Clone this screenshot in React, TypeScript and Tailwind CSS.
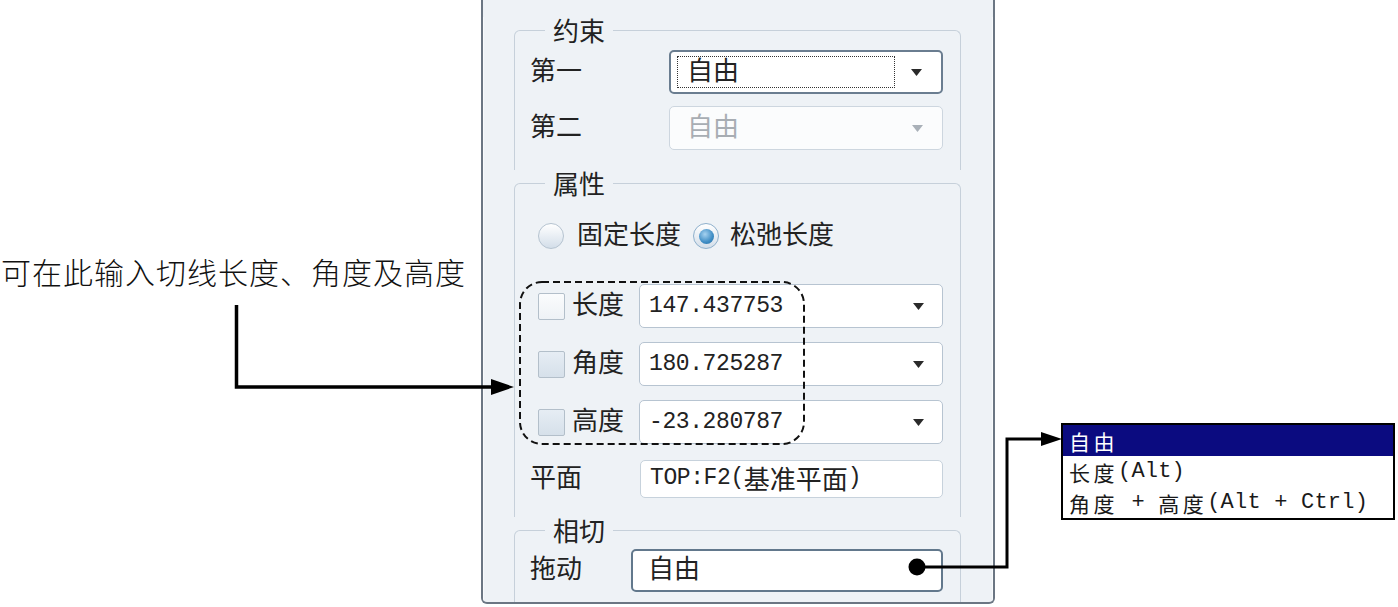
import React from "react";

const CJK_RE = /([\u3000-\u303f\u4e00-\u9fff\uff00-\uffef]+)/;

// splits a label into CJK runs and half-width runs so each gets its own font
function Mixed({ text, cjk, latin }: { text: string; cjk: string; latin: string }) {
  const parts = text.split(CJK_RE).filter(Boolean);
  return (
    <>
      {parts.map((p, i) =>
        CJK_RE.test(p) ? (
          <span key={i} className={cjk}>{p}</span>
        ) : (
          <span key={i} className={latin}>{p}</span>
        )
      )}
    </>
  );
}

const PANEL_CJK = "font-['Noto_Sans_CJK_SC',sans-serif] text-[26px] leading-[26px]";
// block labels sit a few px high in the reference
const LABEL = `${PANEL_CJK} pb-[7px]`;
const PANEL_MONO = "font-['Liberation_Mono','DejaVu_Sans_Mono',monospace] text-[23px] leading-[26px] tracking-[-0.4px] whitespace-pre";

function Arrow({ disabled }: { disabled?: boolean }) {
  return (
    <svg width="11" height="7" viewBox="0 0 11 7" className="shrink-0">
      <path d="M0 0h11L5.5 7z" fill={disabled ? "#a9b0b8" : "#2a2a2a"} />
    </svg>
  );
}

function Group({ title, children, className = "" }: { title: string; children: React.ReactNode; className?: string }) {
  return (
    <fieldset className={`rounded-t-[6px] border border-b-0 border-[#c6d0da] ${className}`}>
      <legend className="ml-[30px] px-[8px] text-[26px] leading-[26px] text-[#222] font-['Noto_Sans_CJK_SC',sans-serif]">
        {title}
      </legend>
      {children}
    </fieldset>
  );
}

function Radio({ checked }: { checked?: boolean }) {
  return (
    <span
      className={`flex h-[26px] w-[26px] shrink-0 items-center justify-center rounded-full border ${
        checked ? "border-[#8eb0cc]" : "border-[#b5c3d0]"
      } bg-gradient-to-b from-[#ffffff] to-[#d3dee9]`}
    >
      {checked && (
        <span className="h-[15px] w-[15px] rounded-full bg-[radial-gradient(circle_at_40%_35%,#a6d2f0,#3d8cc4_60%,#2a6fa3)]" />
      )}
    </span>
  );
}

function Check({ tint }: { tint?: boolean }) {
  return (
    <span
      className={`h-[27px] w-[27px] shrink-0 rounded-[2px] border border-[#b3bfca] ${
        tint ? "bg-gradient-to-b from-[#e6edf4] to-[#d6e0ea]" : "bg-gradient-to-b from-[#fbfcfd] to-[#eef2f6]"
      }`}
    />
  );
}

function ValueRow({ label, value, tint }: { label: string; value: string; tint?: boolean }) {
  return (
    <div className="flex h-[44px] items-center pl-[23px]">
      <Check tint={tint} />
      <span className={`ml-[7px] w-[67px] text-[#222] ${LABEL}`}>{label}</span>
      <div className="flex h-full flex-1 items-center justify-between rounded-[5px] border border-[#b7c4d1] bg-white pl-[9px] pr-[18px]">
        <span className={`text-[#222] ${PANEL_MONO}`}>{value}</span>
        <Arrow />
      </div>
    </div>
  );
}

function Panel() {
  return (
    <div className="h-[604px] w-[514px] shrink-0 overflow-hidden rounded-b-[6px] border-x-2 border-b-2 border-[#6b7683] bg-[#eef2f6]">
      <div className="h-full border-x border-b border-[#f8fafc] pl-[30px] pr-[31px] text-[#222]">
        {/* 约束 */}
        <Group title="约束" className="mt-[17px]">
          <div className="flex flex-col gap-[12px] pb-[20px] pl-[15px] pr-[17px] pt-[7px]">
            <div className="flex h-[44px] items-center">
              <span className={`w-[139px] ${LABEL}`}>第一</span>
              <div className="relative flex h-full flex-1 items-center rounded-[5px] border-2 border-[#6a7d90] bg-white pr-[19px]">
                <div className="ml-[6px] mr-[16px] flex h-[32px] flex-1 items-center border border-dotted border-[#333] pl-[9px]">
                  <span className={LABEL}>自由</span>
                </div>
                <Arrow />
              </div>
            </div>
            <div className="flex h-[44px] items-center">
              <span className={`w-[139px] ${LABEL}`}>第二</span>
              <div className="flex h-full flex-1 items-center justify-between rounded-[5px] border border-[#cdd6df] bg-[#fbfcfd] pl-[17px] pr-[19px]">
                <span className={`text-[#a8adb3] ${LABEL}`}>自由</span>
                <Arrow disabled />
              </div>
            </div>
          </div>
        </Group>

        {/* 属性 */}
        <Group title="属性">
          <div className="flex flex-col pb-[19px] pr-[17px] pt-[27px]">
            <div className="flex h-[26px] items-center pl-[23px]">
              <Radio />
              <span className={`ml-[13px] ${LABEL}`}>固定长度</span>
              <span className="ml-[12px]"><Radio checked /></span>
              <span className={`ml-[11px] ${LABEL}`}>松弛长度</span>
            </div>
            <div className="mt-[35px] flex flex-col gap-[14px]">
              <ValueRow label="长度" value="147.437753" />
              <ValueRow label="角度" value="180.725287" tint />
              <ValueRow label="高度" value="-23.280787" tint />
            </div>
            <div className="mt-[16px] flex h-[38px] items-center pl-[15px]">
              <span className={`w-[110px] ${LABEL}`}>平面</span>
              <div className="flex h-full flex-1 items-center rounded-[5px] border border-[#c7d2dc] bg-white pb-[3px] pl-[9px]">
                <Mixed text="TOP:F2(基准平面)" cjk={PANEL_CJK} latin={PANEL_MONO} />
              </div>
            </div>
          </div>
        </Group>

        {/* 相切 */}
        <Group title="相切">
          <div className="flex h-[80px] flex-col pl-[15px] pr-[17px] pt-[6px]">
            <div className="flex h-[43px] items-center">
              <span className={`w-[101px] ${LABEL}`}>拖动</span>
              <div className="flex h-full flex-1 items-center rounded-[5px] border-2 border-[#62788c] bg-white pl-[15px]">
                <span className={LABEL}>自由</span>
              </div>
            </div>
          </div>
        </Group>
      </div>
    </div>
  );
}

const LIST_CJK = "inline-block h-[26px] font-['Noto_Sans_CJK_SC',sans-serif] text-[21px] leading-[26px] tracking-[3.5px]";
const LIST_MONO = "inline-block h-[26px] font-['Liberation_Mono','DejaVu_Sans_Mono',monospace] text-[22px] leading-[26px] tracking-[0.2px] whitespace-pre";

function DragList() {
  const items = ["自由", "长度(Alt)", "角度 + 高度(Alt + Ctrl)"];
  return (
    <div className="w-[334px] border-2 border-black bg-white">
      {items.map((t, i) => (
        <div
          key={t}
          className={`flex h-[31px] items-center pl-[6px] ${
            i === 0 ? "bg-[#0b0b80] text-white" : "text-[#1a1a1a]"
          }`}
        >
          <Mixed text={t} cjk={LIST_CJK} latin={LIST_MONO} />
        </div>
      ))}
    </div>
  );
}

export default function App() {
  return (
    <div className="relative flex h-[607px] w-[1398px] overflow-hidden bg-white">
      {/* callout text */}
      <div className="w-[481px] shrink-0 pl-[1px] pt-[256px]">
        <p className="whitespace-nowrap font-['Noto_Sans_CJK_SC',sans-serif] text-[30px] font-light leading-[30px] tracking-[1px] text-[#111]">
          可在此输入切线长度、角度及高度
        </p>
      </div>

      <Panel />

      <div className="ml-[66px] pt-[423px]">
        <DragList />
      </div>

      {/* leader lines and highlight */}
      <svg className="pointer-events-none absolute inset-0" width="1398" height="607" viewBox="0 0 1398 607">
        <rect x="520" y="282" width="284" height="162" rx="22" fill="none" stroke="#111" strokeWidth="2" strokeDasharray="7 4" />
        <polyline points="236.5,305 236.5,387 496,387" fill="none" stroke="#000" strokeWidth="3.5" />
        <polygon points="491,379 514,387 491,395" fill="#000" />
        <circle cx="917" cy="567" r="8.5" fill="#000" />
        <polyline points="917,567 1007,567 1007,439 1046,439" fill="none" stroke="#000" strokeWidth="3" />
        <polygon points="1041,432 1062,439 1041,446" fill="#000" />
      </svg>
    </div>
  );
}
